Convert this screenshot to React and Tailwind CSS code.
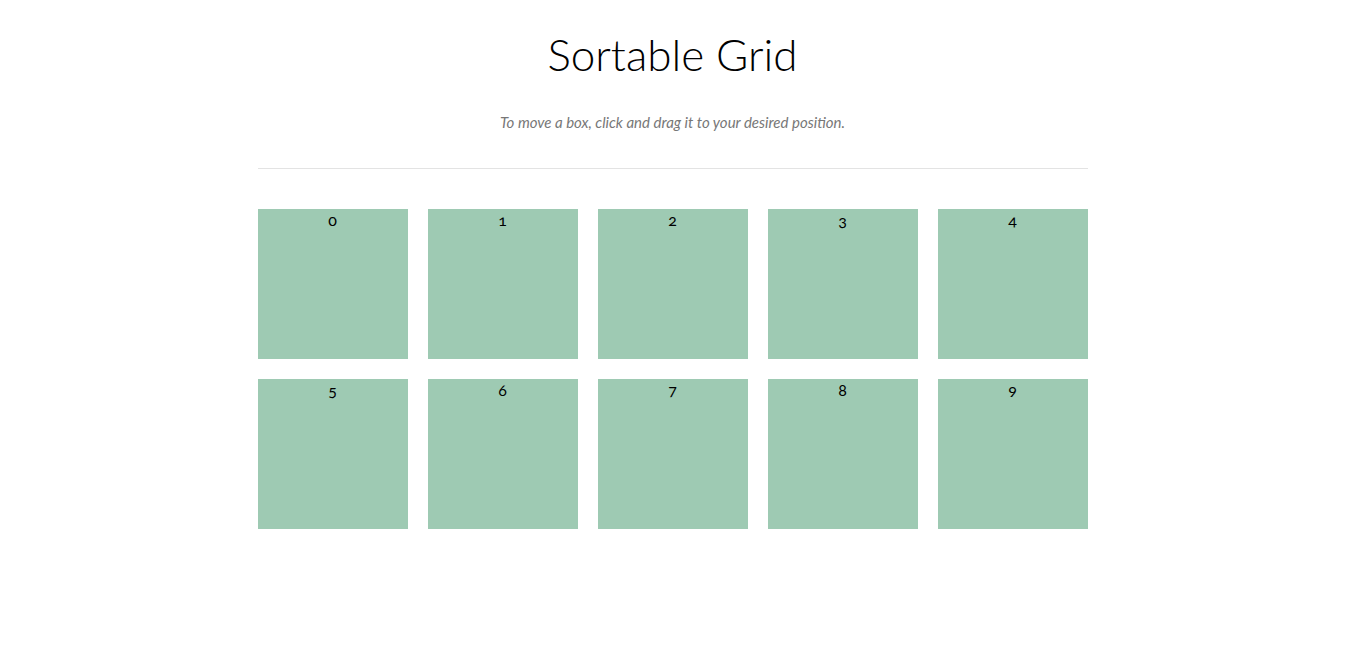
const boxes = [0, 1, 2, 3, 4, 5, 6, 7, 8, 9];

export default function App() {
  return (
    <div className="min-h-screen bg-white font-['Lato','Liberation_Sans',sans-serif]">
      <div className="mx-auto w-[830px] pt-[27px]">
        <h1 className="text-center text-[44px] leading-[54px] font-light text-black">Sortable Grid</h1>
        <p className="mt-[30px] text-center text-[15px] italic text-[#777]">
          To move a box, click and drag it to your desired position.
        </p>
        <hr className="mt-[34px] border-t border-[#e3e3e3]" />
        <div className="mt-10 grid grid-cols-5 gap-5">
          {boxes.map((n) => (
            <div key={n} className="h-[150px] w-[150px] bg-[#9ecab3] text-center text-[16px] leading-[22px] text-black oldstyle-nums">
              {n}
            </div>
          ))}
        </div>
      </div>
    </div>
  );
}
